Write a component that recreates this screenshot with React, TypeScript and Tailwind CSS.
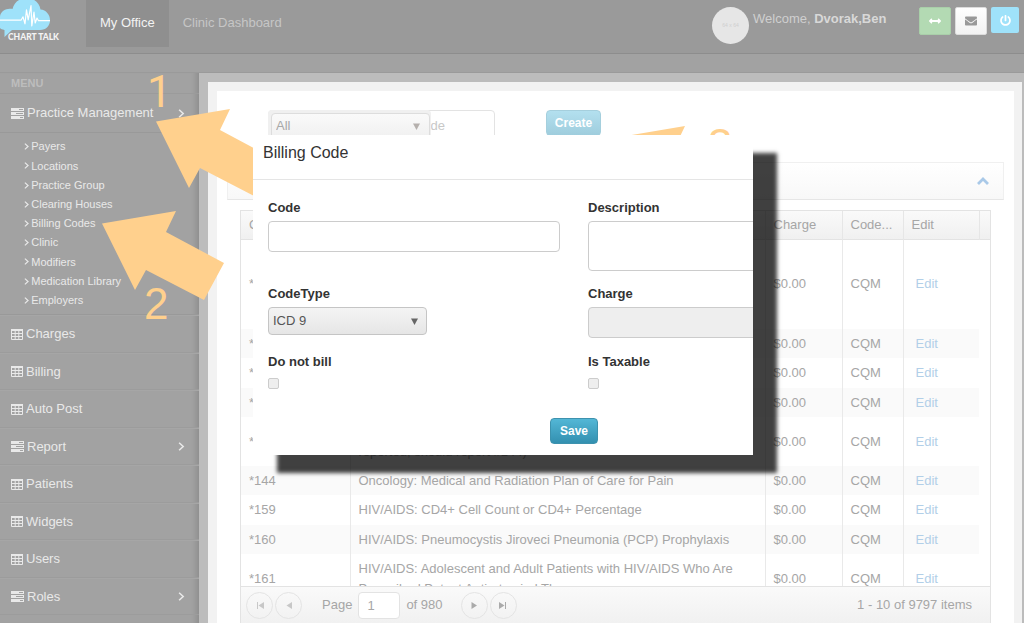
import { FaArrowsAltH, FaEnvelope, FaPowerOff } from 'react-icons/fa'

const SUB_ITEMS = [
  'Payers', 'Locations', 'Practice Group', 'Clearing Houses', 'Billing Codes',
  'Clinic', 'Modifiers', 'Medication Library', 'Employers',
]

const MENU_ITEMS = [
  { label: 'Charges' },
  { label: 'Billing' },
  { label: 'Auto Post' },
  { label: 'Report', nested: true },
  { label: 'Patients' },
  { label: 'Widgets' },
  { label: 'Users' },
  { label: 'Roles', nested: true },
]

const ROWS = [
  { code: '*1', description: 'Diabetes: Hemoglobin A1c Poor Control' },
  { code: '*102', description: 'Prostate Cancer: Avoidance of Overuse of Bone Scan' },
  { code: '*110', description: 'Preventive Care: Influenza Immunization' },
  { code: '*111', description: 'Pneumonia Vaccination Status for Older Adults' },
  { code: '*143', description: 'Oncology: Medical and Radiation Pain Intensity Quantified (if reported, should report #144)' },
  { code: '*144', description: 'Oncology: Medical and Radiation Plan of Care for Pain' },
  { code: '*159', description: 'HIV/AIDS: CD4+ Cell Count or CD4+ Percentage' },
  { code: '*160', description: 'HIV/AIDS: Pneumocystis Jiroveci Pneumonia (PCP) Prophylaxis' },
  { code: '*161', description: 'HIV/AIDS: Adolescent and Adult Patients with HIV/AIDS Who Are Prescribed Potent Antiretroviral Therapy' },
]

const ARROW = '0,12.5 74,0 64,21 122,52 102,89 44,59 33,79'

function TableIcon() {
  return (
    <svg width="12" height="11" viewBox="0 0 12 11" className="shrink-0" fill="none" stroke="currentColor">
      <path d="M.5 1.5h11v9H.5zM4.2 2v8.5M7.8 2v8.5M.5 4.5h11M.5 7.5h11" />
      <path d="M0 1h12" strokeWidth="2" />
    </svg>
  )
}

function TasksIcon() {
  return (
    <svg width="13" height="11" viewBox="0 0 13 11" className="shrink-0" fill="currentColor">
      <path fillRule="evenodd" d="M0 0h13v3H0zM8 1v1h4V1zM0 4h13v3H0zM5 5v1h7V5zM0 8h13v3H0zM9 9v1h3V9z" />
    </svg>
  )
}

function AngleRight({ size = 8 }: { size?: number }) {
  return (
    <svg width={size * 0.75} height={size} viewBox="0 0 6 8" fill="none" stroke="currentColor" strokeWidth="1.4" className="shrink-0">
      <path d="M1 .7 4.6 4 1 7.3" />
    </svg>
  )
}

function DownArrow({ className }: { className: string }) {
  return (
    <svg width="7" height="7" viewBox="0 0 7 7" className={className} fill="currentColor">
      <path d="M0 .5h7L3.5 7z" />
    </svg>
  )
}

function Logo() {
  return (
    <a href="#" aria-label="Chart Talk" className="block h-[44px] w-[86px] shrink-0">
      <svg width="80" height="44" viewBox="0 0 80 44">
        <path d="M0 17C0 13 4 9 8 9C9.500 9 11 8.500 12.500 9C14 2 20-2 27-2C34-2 39.500 3 40.500 9.500C46 10 50 14.500 50 20C50 26 46 30 40 30H12L4.500 37V30C2 29.500 1 29 0 28z" fill="#9fe2fa" />
        <path d="M0 20.200h21l2-3.400 2 7 1.500-14 1.700 10L31 5.500 31.800 26l2.200-14 1.200 11 1.800-5 1.500 2.700H50" fill="none" stroke="#fff" strokeWidth="1.200" strokeLinejoin="round" />
        <text x="8" y="39.500" fill="#f4f4f4" fontFamily="Lato, sans-serif" fontSize="8.5" fontWeight="900">CHART TALK</text>
      </svg>
    </a>
  )
}

function Header() {
  return (
    <header className="flex h-[54px] shrink-0 items-start border-b border-[#8d8d8d] bg-[#9a9a9a]">
      <Logo />
      <nav className="flex">
        <a href="#" className="h-[47px] bg-[#8f8f8f] px-[14px] leading-[46px] text-[#f3f3f3]">My Office</a>
        <a href="#" className="h-[47px] px-[14px] leading-[46px] text-[#c6c6c6]">Clinic Dashboard</a>
      </nav>
      <div className="ml-auto flex pt-[7px] pr-[5px]">
        <div className="flex size-[37px] items-center justify-center rounded-full bg-[#e6e6e6] text-[5px] text-[#cfcfcf]">64 x 64</div>
        <p className="ml-1 w-[166px] leading-6 text-[#cfcfcf]">Welcome, <b className="text-[#d8d8d8]">Dvorak,Ben</b></p>
        <div className="flex items-start gap-1">
          <button aria-label="Expand" className="flex h-7 w-8 items-center justify-center rounded-xs border border-[#a9cfa9] bg-[#b3dab3] text-white"><FaArrowsAltH size={12} /></button>
          <button aria-label="Messages" className="flex h-7 w-8 items-center justify-center rounded-xs border border-[#dcdcdc] bg-linear-to-b from-white to-[#f2f2f2] text-[#999]"><FaEnvelope size={12} /></button>
          <button aria-label="Log out" className="flex h-[26px] w-7 items-center justify-center rounded-xs bg-[#9fe2fa] text-white"><FaPowerOff size={11} /></button>
        </div>
      </div>
    </header>
  )
}

function Sidebar() {
  return (
    <aside className="w-[199px] shrink-0 bg-[#a2a2a2] text-[#e9e9e9] shadow-[inset_-7px_0_5px_-4px_rgba(0,0,0,0.12)]">
      <p className="h-[21px] border-b border-[#9b9b9b] pl-[11px] text-[11px] leading-5 font-bold text-[#bdbdbd]">MENU</p>
      <a href="#" className="flex h-[39px] items-center gap-[3px] border-b border-[#999] pr-[14px] pl-[11px]">
        <TasksIcon />
        <span>Practice Management</span>
        <span className="ml-auto"><AngleRight size={9} /></span>
      </a>
      <ul className="flex h-[182px] flex-col border-b border-[#999] pt-1 pb-1 text-[11px]">
        {SUB_ITEMS.map(item => (
          <li key={item} className="flex flex-1 items-center">
            <a href="#" className="flex items-center gap-[2px] pl-6"><AngleRight size={7} />{item}</a>
          </li>
        ))}
      </ul>
      <ul>
        {MENU_ITEMS.map(item => (
          <li key={item.label} className="h-[38px] border-t border-b border-t-[#a6a6a6] border-b-[#9c9c9c] even:h-[37px]">
            <a href="#" className="flex h-full items-center gap-[3px] pr-[14px] pl-[11px]">
              {item.nested ? <TasksIcon /> : <TableIcon />}
              {item.label}
              {item.nested && <span className="ml-auto"><AngleRight size={9} /></span>}
            </a>
          </li>
        ))}
      </ul>
    </aside>
  )
}

function Toolbar() {
  return (
    <div className="flex items-start gap-[51px] pt-[19px] pl-[51px]">
      <div className="grid">
        <input aria-label="Search code" placeholder="Search Code" className="col-start-1 row-start-1 h-[30px] w-[227px] rounded-sm border border-[#e3e3e3] pl-[100px] placeholder:text-[#c8c8c8]" />
        <div className="relative col-start-1 row-start-1 h-8 w-[163px] rounded-sm bg-[#f0f0f0] pt-[3px] pl-[3px] text-[#a8a8a8]">
          <select aria-label="Filter" className="h-[26px] w-[159px] appearance-none rounded-sm border border-[#ddd] bg-linear-to-b from-[#fafafa] to-[#f0f0f0] pl-1">
            <option>All</option>
          </select>
          <DownArrow className="pointer-events-none absolute top-[13px] right-[11px] text-[#b5b0ad]" />
        </div>
      </div>
      <button className="h-[26px] w-[55px] rounded-sm border border-[#a5cfdd] bg-linear-to-b from-[#b3e0ef] to-[#9fcddd] text-xs font-bold text-white">Create</button>
    </div>
  )
}

function BillingGrid() {
  return (
    <div className="mr-[23px] ml-[23px] flex min-h-0 flex-1 flex-col border-x border-t border-[#e3e3e3] text-[#a6a6a6]">
      <div className="min-h-0 flex-1 overflow-hidden">
        <table className="w-full table-fixed border-collapse text-left leading-5">
          <thead className="bg-linear-to-b from-[#fafafa] to-[#f0f0f0]">
            <tr className="h-7 border-b border-[#e3e3e3]">
              <th className="w-[109px] px-2 font-normal">Code</th>
              <th className="border-l border-[#e6e6e6] px-2 font-normal">Description</th>
              <th className="w-[77px] border-l border-[#e6e6e6] px-2 font-normal">Charge</th>
              <th className="w-[61px] truncate border-l border-[#e6e6e6] px-2 font-normal">Code...</th>
              <th className="w-[76px] border-l border-[#e6e6e6] px-2 font-normal">Edit</th>
              <th className="w-[11px] border-l border-[#e6e6e6]" />
            </tr>
          </thead>
          <tbody>
            {ROWS.map(row => (
              <tr key={row.code} className="group h-[29px] first:h-[90px] last:h-[50px] nth-[4n+3]:h-[30px] nth-[5]:h-[49px]">
                <td className="px-2 group-even:bg-[#fafafa]">{row.code}</td>
                <td className="border-l border-[#e9e9e9] px-2 py-1 group-even:bg-[#fafafa]">{row.description}</td>
                <td className="border-l border-[#e9e9e9] px-2 group-even:bg-[#fafafa]">$0.00</td>
                <td className="border-l border-[#e9e9e9] px-2 group-even:bg-[#fafafa]">CQM</td>
                <td className="border-l border-[#e9e9e9] px-3 group-even:bg-[#fafafa]"><a href="#" className="text-[#b2cfe8]">Edit</a></td>
              </tr>
            ))}
          </tbody>
        </table>
      </div>
      <div className="flex h-[37px] shrink-0 items-center border-t border-[#e3e3e3] bg-linear-to-b from-[#fafafa] to-[#f1f1f1] pr-[18px] pl-[5px]">
        <PagerButton label="First page" path="M1 0h1v7H1zM8 0v7L2.500 3.500z" faded />
        <PagerButton label="Previous page" path="M7 0v7L1.500 3.500z" faded />
        <label className="flex items-center pl-[18px]">
          Page
          <input defaultValue="1" className="mx-[6px] h-[27px] w-[42px] rounded-sm border border-[#e3e3e3] bg-white pl-2" />
          of 980
        </label>
        <div className="flex pl-[18px]">
          <PagerButton label="Next page" path="M1.500 0v7L7 3.500z" />
          <PagerButton label="Last page" path="M0 0v7L5.500 3.500zM6 0h1v7H6z" />
        </div>
        <span className="ml-auto">1 - 10 of 9797 items</span>
      </div>
    </div>
  )
}

function PagerButton({ label, path, faded }: { label: string; path: string; faded?: boolean }) {
  return (
    <button aria-label={label} className="mr-[2px] flex size-[27px] items-center justify-center rounded-full border border-[#e4e4e4] text-[#aaa]">
      <svg width="8" height="7" viewBox="0 0 8 7" fill="currentColor" opacity={faded ? 0.6 : 1}><path d={path} /></svg>
    </button>
  )
}

function Annotations() {
  return (
    <svg className="pointer-events-none absolute inset-0 h-full w-full" fill="#ffd08d" fontFamily="Liberation Sans, sans-serif" fontSize="44">
      <polygon points={ARROW} transform="translate(156 109)" />
      <polygon points={ARROW} transform="translate(102 211)" />
      <polygon points={ARROW} transform="translate(611 126)" />
      <text x="147" y="107" fontFamily="Roboto, sans-serif">1</text>
      <text x="144" y="319">2</text>
      <text x="708" y="160">3</text>
    </svg>
  )
}

function BillingCodeDialog() {
  return (
    <div role="dialog" aria-labelledby="dialog-title" className="absolute top-[135px] left-[253px] w-[500px] bg-white text-[#333] shadow-[24px_18px_4px_rgba(0,0,0,0.75)]">
      <h2 id="dialog-title" className="h-[45px] border-b border-[#e5e5e5] pl-[10px] text-base leading-9">Billing Code</h2>
      <form className="overflow-hidden pt-[17px] pb-[11px] pl-[15px]">
        <div className="grid w-[612px] grid-cols-[292px_292px] gap-x-7">
          <div className="h-[86px]">
            <label htmlFor="code" className="block h-6 leading-[22px] font-bold">Code</label>
            <input id="code" className="block h-[31px] w-full rounded-sm border border-[#ccc] px-2" />
          </div>
          <div className="h-[86px]">
            <label htmlFor="description" className="block h-6 leading-[22px] font-bold">Description</label>
            <textarea id="description" className="block h-[50px] w-full resize-none rounded-sm border border-[#ccc] px-2" />
          </div>
          <div className="h-[68px]">
            <label htmlFor="code-type" className="block h-6 leading-[22px] font-bold">CodeType</label>
            <div className="relative w-[159px]">
              <select id="code-type" className="block h-7 w-full appearance-none rounded-sm border border-[#c5c5c5] bg-linear-to-b from-[#f4f4f4] to-[#e6e6e6] pl-1 text-[#555]">
                <option>ICD 9</option>
              </select>
              <DownArrow className="pointer-events-none absolute top-[11px] right-[9px] text-[#666]" />
            </div>
          </div>
          <div className="h-[68px]">
            <label htmlFor="charge" className="block h-6 leading-[22px] font-bold">Charge</label>
            <input id="charge" disabled className="block h-[31px] w-full rounded-sm border border-[#ccc] bg-[#eee] px-2" />
          </div>
          <div className="h-[67px]">
            <label htmlFor="do-not-bill" className="block h-[27px] leading-[22px] font-bold">Do not bill</label>
            <input id="do-not-bill" type="checkbox" className="block size-[11px] appearance-none rounded-xs border border-[#ccc] bg-[#eee]" />
          </div>
          <div className="h-[67px]">
            <label htmlFor="taxable" className="block h-[27px] leading-[22px] font-bold">Is Taxable</label>
            <input id="taxable" type="checkbox" className="block size-[11px] appearance-none rounded-xs border border-[#ccc] bg-[#eee]" />
          </div>
        </div>
        <button type="button" className="ml-[282px] block h-[26px] w-12 rounded-sm border border-[#3d92ae] bg-linear-to-b from-[#53b7d6] to-[#3390b0] text-xs font-bold text-white">Save</button>
      </form>
    </div>
  )
}

export default function App() {
  return (
    <div className="relative flex h-screen flex-col overflow-hidden bg-[#a2a2a2] font-['Liberation_Sans',Arial,sans-serif] text-[13px]">
      <Header />
      <div className="h-[19px] shrink-0 border-b border-[#9a9a9a]" />
      <div className="flex min-h-0 flex-1">
        <Sidebar />
        <main className="flex min-w-0 flex-1 flex-col bg-[#bcbcbc] pt-[9px] pr-[2px] pl-[9px]">
          <div className="flex min-h-0 flex-1 flex-col bg-[#f2f2f2] px-[9px] pt-[9px] pr-2">
            <section className="flex min-h-0 flex-1 flex-col bg-white">
              <Toolbar />
              <div className="mx-[10px] mt-5 mb-[10px] flex h-[38px] shrink-0 items-center justify-end border border-[#f0f0f0] border-b-[#e6e6e6] bg-linear-to-b from-white to-[#f8f8f8] pr-[14px]">
                <button aria-label="Collapse" className="text-[#a9c9e8]">
                  <svg width="12" height="8" viewBox="0 0 12 8" fill="none" stroke="currentColor" strokeWidth="2.800"><path d="M1 7l5-5 5 5" /></svg>
                </button>
              </div>
              <BillingGrid />
            </section>
          </div>
        </main>
      </div>
      <Annotations />
      <BillingCodeDialog />
    </div>
  )
}
